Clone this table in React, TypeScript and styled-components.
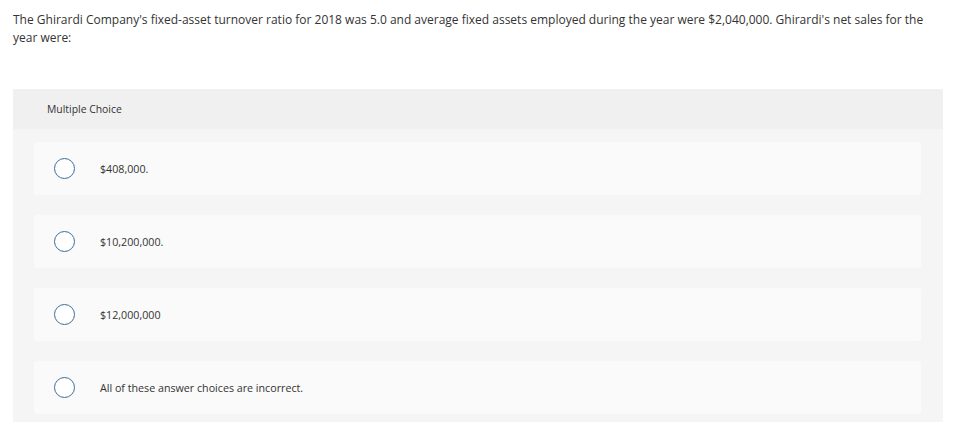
import styled, { createGlobalStyle } from "styled-components";

const GlobalStyle = createGlobalStyle`
  html, body {
    margin: 0;
    padding: 0;
    background: #ffffff;
  }
  body {
    font-family: "Open Sans", "Liberation Sans", Arial, sans-serif;
    color: #333333;
  }
`;

const Page = styled.div`
  padding: 11px 13px 0 13px;
  width: 930px;
`;

const Question = styled.p`
  margin: 0 0 42px 0;
  font-size: 12px;
  line-height: 18px;
  color: #333333;
  padding-right: 8px;
`;

const Panel = styled.section`
  background: #f5f5f5;
  border-radius: 2px 2px 0 0;
  padding-bottom: 20px;
`;

const PanelHeader = styled.div`
  height: 40px;
  display: flex;
  align-items: center;
  padding-left: 34px;
  background: #f0f0f0;
  border-radius: 2px 2px 0 0;
  font-size: 10.4px;
  color: #333333;
`;

const Choices = styled.ul`
  list-style: none;
  margin: 0;
  padding: 13px 22px 0 21px;
  display: flex;
  flex-direction: column;
  gap: 20px;
`;

const Choice = styled.li`
  height: 53px;
  display: flex;
  align-items: center;
  background: #fafafa;
  border-radius: 3px;
  padding-left: 20px;
`;

const Radio = styled.span`
  width: 19px;
  height: 19px;
  border-radius: 50%;
  border: 1.3px solid #3c6e9a;
  background: #ffffff;
  flex: none;
`;

const Label = styled.span`
  margin-left: 25px;
  font-size: 10.7px;
  color: #333333;
`;

const choices = [
  "$408,000.",
  "$10,200,000.",
  "$12,000,000",
  "All of these answer choices are incorrect.",
];

export default function App() {
  return (
    <>
      <GlobalStyle />
      <Page>
        <Question>
          The Ghirardi Company's fixed-asset turnover ratio for 2018 was 5.0 and
          average fixed assets employed during the year were $2,040,000.
          Ghirardi's net sales for the year were:
        </Question>
        <Panel>
          <PanelHeader>Multiple Choice</PanelHeader>
          <Choices>
            {choices.map((c) => (
              <Choice key={c}>
                <Radio />
                <Label>{c}</Label>
              </Choice>
            ))}
          </Choices>
        </Panel>
      </Page>
    </>
  );
}
